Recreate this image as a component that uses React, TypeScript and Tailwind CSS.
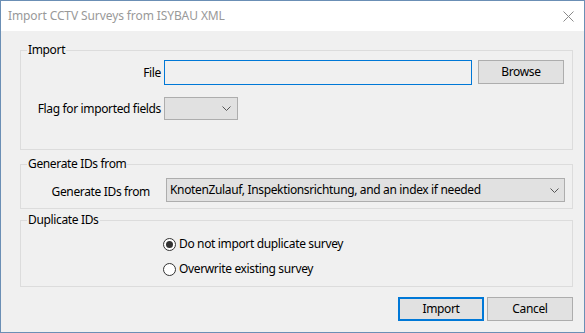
import React from "react";

function Chevron() {
  return (
    <svg width="9" height="5" viewBox="0 0 9 5" className="block">
      <polyline points="0.5,0.5 4.5,4.5 8.5,0.5" fill="none" stroke="#555" strokeWidth="1" />
    </svg>
  );
}

function Radio({ checked, label }: { checked?: boolean; label: string }) {
  return (
    <div className="flex h-[16px] items-center gap-[3px]">
      <div className="flex h-[13px] w-[13px] items-center justify-center rounded-full border border-[#333] bg-white">
        {checked && <div className="h-[7px] w-[7px] rounded-full bg-[#333]" />}
      </div>
      <span className="leading-[16px]">{label}</span>
    </div>
  );
}

export default function App() {
  return (
    <div className="flex h-[333px] w-[585px] flex-col border border-[#6b8fb5] font-['Noto_Sans',sans-serif] text-[12px] tracking-[-0.35px] text-black">
      <div className="flex h-[30px] items-center justify-between bg-white pl-[7px] pr-[10px]">
        <span className="text-[12px] tracking-[-0.1px] text-[#999999]">Import CCTV Surveys from ISYBAU XML</span>
        <svg width="11" height="11" viewBox="0 0 11 11" className="block">
          <line x1="0.5" y1="0.5" x2="10.5" y2="10.5" stroke="#8a8a8a" strokeWidth="1" />
          <line x1="10.5" y1="0.5" x2="0.5" y2="10.5" stroke="#8a8a8a" strokeWidth="1" />
        </svg>
      </div>
      <div className="flex flex-1 flex-col bg-[#f0f0f0] pl-[19px] pr-[11px] pt-[11px]">
        <fieldset className="m-0 h-[108px] min-w-0 border border-[#dcdcdc] p-0">
          <legend className="ml-[6px] px-[1px] leading-[16px]">Import</legend>
          <div className="flex flex-col">
            <div className="mt-[2px] flex items-start">
              <div className="flex h-[25px] w-[140px] items-center justify-end">File</div>
              <div className="ml-[3px] h-[25px] w-[308px] border border-[#0078d7] bg-[#f0f0f0]" />
              <div className="ml-[6px] flex h-[24px] w-[86px] items-center justify-center border border-[#adadad] bg-[#e1e1e1]">
                Browse
              </div>
            </div>
            <div className="mt-[12px] flex items-center">
              <div className="w-[140px] text-right">Flag for imported fields</div>
              <div className="ml-[3px] flex h-[23px] w-[74px] items-center justify-end border border-[#adadad] bg-[#e1e1e1] pr-[6px]">
                <Chevron />
              </div>
            </div>
          </div>
        </fieldset>

        <fieldset className="m-0 mt-[6px] h-[53px] min-w-0 border border-[#dcdcdc] p-0">
          <legend className="ml-[6px] px-[1px] leading-[16px]">Generate IDs from</legend>
          <div className="mt-[6px] flex items-center">
            <div className="w-[129px] pt-[3px] text-right">Generate IDs from</div>
            <div className="ml-[16px] flex h-[24px] w-[399px] items-center justify-between border border-[#adadad] bg-[#e1e1e1] pl-[3px] pr-[5px]">
              <span>KnotenZulauf, Inspektionsrichtung, and an index if needed</span>
              <Chevron />
            </div>
          </div>
        </fieldset>

        <fieldset className="m-0 mt-[3px] h-[75px] min-w-0 border border-[#dcdcdc] p-0">
          <legend className="ml-[6px] px-[1px] leading-[16px]">Duplicate IDs</legend>
          <div className="mt-[8px] flex flex-col gap-[9px] pl-[142px]">
            <Radio checked label="Do not import duplicate survey" />
            <Radio label="Overwrite existing survey" />
          </div>
        </fieldset>

        <div className="mt-[10px] flex justify-end gap-[3px]">
          <div className="flex h-[24px] w-[86px] items-center justify-center border-2 border-[#0078d7] bg-[#e1e1e1]">
            Import
          </div>
          <div className="flex h-[24px] w-[86px] items-center justify-center border border-[#adadad] bg-[#e1e1e1]">
            Cancel
          </div>
        </div>
      </div>
    </div>
  );
}
